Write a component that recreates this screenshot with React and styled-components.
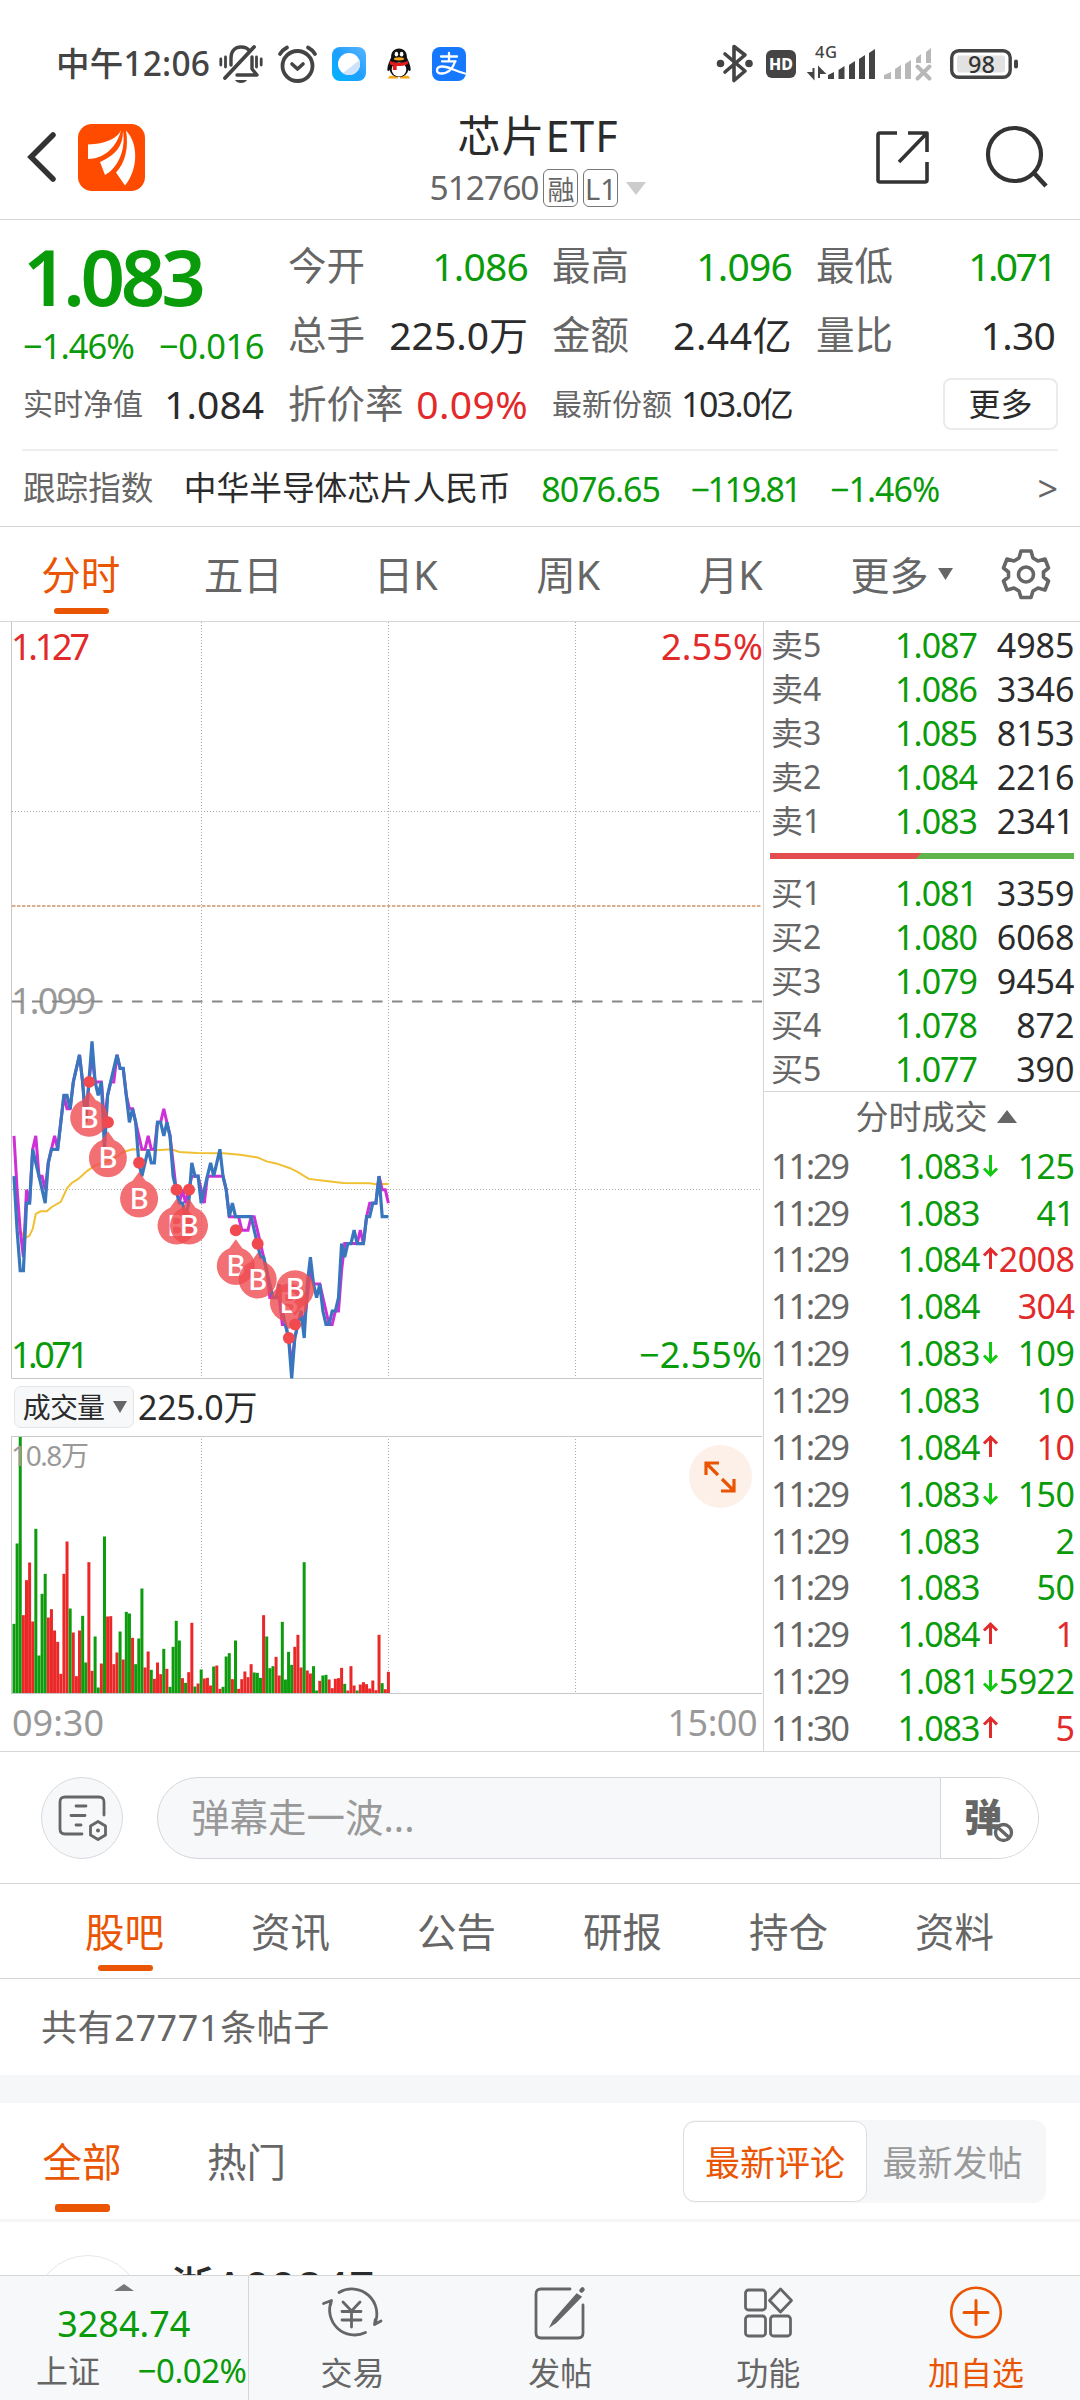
import React from "react";
import styled, { createGlobalStyle } from "styled-components";

const GREEN = "#0a9b0a";
const RED = "#e22a2a";
const ORANGE = "#ea5504";
const DARK = "#2b2b2b";
const GREY = "#666";
const LINE = "#d6d6d6";
const FONT = `"Noto Sans", "Noto Sans CJK SC", sans-serif`;

const GlobalStyle = createGlobalStyle`
  * { box-sizing: border-box; }
  body {
    margin: 0;
    background: #fff;
    font-family: ${FONT};
    color: ${DARK};
  }
  svg { display: block; flex: none; overflow: visible; }
`;

const Page = styled.div`
  width: 1080px;
  height: 2400px;
  overflow: hidden;
  display: flex;
  flex-direction: column;
  background: #fff;
`;

const Text = styled.span`
  font-size: ${(p) => p.$size || 39}px;
  line-height: 1;
  color: ${(p) => p.$color || DARK};
  font-weight: ${(p) => p.$weight || 400};
  letter-spacing: ${(p) => p.$ls || 0}px;
  white-space: nowrap;
`;

/* status bar */

const StatusBar = styled.div`
  height: 98px;
  flex: none;
  padding: 29px 62px 0 56px;
  display: flex;
  align-items: center;
`;

const StatusGroup = styled.div`
  display: flex;
  align-items: center;
  gap: ${(p) => p.$gap}px;
  margin-left: ${(p) => p.$left || 0}px;
`;

const Spacer = styled.div`
  flex: 1;
`;

/* header */

const Header = styled.div`
  height: 122px;
  flex: none;
  padding: 0 32px 0 28px;
  display: grid;
  grid-template-columns: 250px 1fr 250px;
  border-bottom: 1px solid ${LINE};
`;

const HeaderSide = styled.div`
  display: flex;
  align-items: center;
  gap: ${(p) => p.$gap}px;
  justify-content: ${(p) => (p.$end ? "flex-end" : "flex-start")};
  padding-bottom: 3px;
`;

const HeaderTitle = styled.div`
  display: flex;
  flex-direction: column;
  align-items: center;
  padding-top: 16px;
`;

const CodeRow = styled.div`
  display: flex;
  align-items: center;
  height: 38px;
  margin-top: 12px;
  gap: 5px;
`;

const Badge = styled.span`
  width: 35px;
  height: 38px;
  border: 1px solid #777;
  border-radius: 6px;
  display: flex;
  align-items: center;
  justify-content: center;
  font-size: ${(p) => p.$size}px;
  color: ${GREY};
`;

const CodeArrow = styled.div`
  margin-left: 3px;
`;

/* quote */

const Quote = styled.div`
  flex: none;
  height: 231px;
  margin: 0 22px;
  padding: 11px 0 0 1px;
  border-bottom: 2px solid #eee;
  display: grid;
  grid-template-columns: 241px 240px 240px 239px;
  grid-template-rows: repeat(3, 69px);
  column-gap: 24px;
`;

const PriceBlock = styled.div`
  grid-row: span 2;
  display: flex;
  flex-direction: column;
  justify-content: space-between;
  padding: 6px 0 6px;
`;

const Cell = styled.div`
  display: flex;
  align-items: center;
  justify-content: ${(p) => (p.$end ? "flex-end" : "space-between")};
`;

const MoreButton = styled.button`
  width: 115px;
  height: 52px;
  border: 2px solid #ebebeb;
  border-radius: 8px;
  background: #fff;
  padding: 0;
  margin-right: -3px;
  font-family: inherit;
  font-size: 32px;
  line-height: 1;
  color: ${DARK};
`;

const IndexRow = styled.div`
  flex: none;
  height: 76px;
  padding: 0 22px 0 23px;
  display: flex;
  align-items: center;
  gap: 30.5px;
  border-bottom: 1px solid ${LINE};
`;

/* tabs */

const Tabs = styled.div`
  flex: none;
  height: ${(p) => p.$height}px;
  padding-left: ${(p) => p.$left || 0}px;
  display: flex;
  align-items: center;
  border-bottom: 1px solid ${LINE};
`;

const Tab = styled.div`
  position: relative;
  width: ${(p) => p.$width}px;
  height: 100%;
  display: flex;
  align-items: center;
  justify-content: center;
  font-size: 39.5px;
  padding-bottom: 2px;
  padding-right: 1px;
  color: ${(p) => (p.$active ? ORANGE : GREY)};

  &::after {
    content: "";
    display: ${(p) => (p.$active ? "block" : "none")};
    position: absolute;
    left: 50%;
    bottom: 7px;
    width: 55px;
    height: ${(p) => p.$bar || 6}px;
    margin-left: -27.5px;
    border-radius: 3px;
    background: ${ORANGE};
  }
`;

const MoreTab = styled.div`
  display: flex;
  align-items: center;
  gap: 9px;
  width: 151px;
  margin-left: 38px;
`;

/* market: chart + order book */

const Market = styled.div`
  flex: none;
  height: 1130px;
  display: flex;
  border-bottom: 1px solid ${LINE};
`;

const ChartSide = styled.div`
  width: 763px;
  display: flex;
  flex-direction: column;
`;

const VolumeHead = styled.div`
  height: 57px;
  padding: 0 0 2px 14px;
  display: flex;
  align-items: center;
  gap: 4px;
`;

const VolumeSelect = styled.div`
  width: 120px;
  height: 42px;
  border: 1px solid #e3e5e8;
  border-radius: 7px;
  background: #f7f8fa;
  display: flex;
  align-items: center;
  justify-content: center;
  gap: 9px;
  padding-left: 2px;
`;

const TimeAxis = styled.div`
  flex: 1;
  padding: 0 6px 1px 12px;
  display: flex;
  align-items: center;
  justify-content: space-between;
`;

const BookSide = styled.div`
  flex: 1;
  border-left: 1px solid ${LINE};
  display: flex;
  flex-direction: column;
  padding-top: 1px;
`;

const OrderRow = styled.div`
  height: 44px;
  padding: 0 5.5px 0 7px;
  display: grid;
  grid-template-columns: 80px 126px 1fr;
  align-items: center;
  justify-items: end;

  > :first-child { justify-self: start; }
`;

const TickRow = styled(OrderRow)`
  height: 46.9px;
  padding-top: 1px;
  grid-template-columns: 100px 108.5px 18px 1fr;
`;

const RatioBar = styled.div`
  height: 6px;
  margin: 10px 6px 12px;
  background: linear-gradient(135deg, #e34d4d 0 49%, #5fb54b 49%);
`;

const TickTitle = styled.div`
  height: 51px;
  border-top: 1px solid ${LINE};
  display: flex;
  align-items: center;
  justify-content: center;
  gap: 9px;
  padding-left: 28px;
  padding-bottom: 1px;
`;

/* comment input */

const DanmuBar = styled.div`
  flex: none;
  height: 132px;
  padding: 0 41px;
  display: flex;
  align-items: center;
  gap: 34px;
  border-bottom: 1px solid ${LINE};
`;

const RoundButton = styled.div`
  width: 82px;
  height: 82px;
  border: 1.5px solid #d8dade;
  border-radius: 50%;
  background: #f7f8fa;
  display: flex;
  align-items: center;
  justify-content: center;
  padding-left: 2px;
`;

const DanmuInput = styled.div`
  flex: 1;
  height: 82px;
  border: 1.5px solid #d4d6da;
  border-radius: 41px;
  background: #f7f8fa;
  overflow: hidden;
  display: flex;
  align-items: center;
  justify-content: space-between;
  padding-left: 33px;
`;

const DanmuSwitch = styled.div`
  position: relative;
  width: 98px;
  height: 100%;
  background: #fff;
  border-left: 1.5px solid #d4d6da;
  padding: 0 0 4px 23px;
  display: flex;
  align-items: center;

  svg {
    position: absolute;
    left: 52px;
    top: 44px;
  }
`;

/* posts */

const PostCount = styled.div`
  flex: none;
  height: 96px;
  padding: 1px 0 0 41px;
  display: flex;
  align-items: center;
`;

const Band = styled.div`
  flex: none;
  height: 28px;
  background: #f6f7f9;
`;

const FilterRow = styled.div`
  flex: none;
  height: 119px;
  padding-right: 34px;
  display: flex;
  align-items: center;
  border-bottom: 3px solid #f5f6f8;
`;

const SortToggle = styled.div`
  margin-left: auto;
  width: 363px;
  height: 83px;
  border-radius: 12px;
  background: #f6f7f9;
  display: flex;
  align-items: center;
`;

const SortOption = styled.div`
  width: ${(p) => (p.$active ? 184 : 171)}px;
  height: 81px;
  border-radius: 12px;
  border: ${(p) => (p.$active ? "1.5px solid #dcdde0" : "none")};
  background: ${(p) => (p.$active ? "#fff" : "transparent")};
  color: ${(p) => (p.$active ? ORANGE : "#999")};
  font-size: 35px;
  padding-bottom: 1px;
  display: flex;
  align-items: center;
  justify-content: center;
`;

const Feed = styled.div`
  flex: 1;
  min-height: 0;
  overflow: hidden;
  padding: 33px 0 0 34px;
  display: flex;
  gap: 29px;
`;

const Avatar = styled.div`
  flex: none;
  width: 108px;
  height: 108px;
  border: 1px solid #e6e6e6;
  border-radius: 50%;
`;

const Author = styled.div`
  padding-top: 10px;
`;

/* bottom bar */

const BottomBar = styled.div`
  flex: none;
  height: 125px;
  background: #f7f8fa;
  border-top: 1px solid ${LINE};
  display: flex;
`;

const IndexBox = styled.div`
  width: 249px;
  border-right: 1px solid ${LINE};
  display: flex;
  flex-direction: column;
  align-items: center;
  padding-top: 8px;
`;

const IndexValue = styled(Text)`
  margin-top: 15px;
`;

const IndexLine = styled.div`
  width: 100%;
  padding: 0 1px 0 36px;
  margin-top: 12px;
  display: flex;
  justify-content: space-between;
  align-items: center;
`;

const NavItem = styled.div`
  width: 208.3px;
  padding-top: 10px;
  display: flex;
  flex-direction: column;
  align-items: center;
  gap: 17px;
`;

/* icons */

const Triangle = ({ w, h, color, up }) => (
  <svg width={w} height={h}>
    <path d={up ? `M0 ${h}L${w / 2} 0L${w} ${h}z` : `M0 0H${w}L${w / 2} ${h}z`} fill={color} />
  </svg>
);

const MuteIcon = () => (
  <svg width="44" height="38" viewBox="0 0 44 38" fill="none" stroke="#444" strokeWidth="3.4" strokeLinecap="round">
    <path d="M12 20V13C12 6 16 2 22 2c4 0 7 1.500 8.500 4" />
    <path d="M33 12v12l5 6H18" strokeLinejoin="round" />
    <path d="M35 2L6 33" strokeWidth="3.800" />
    <path d="M1.800 14v6M6.500 12v10M37.500 12v10M42.200 14v6" strokeWidth="2.800" />
    <path d="M16 35h12c-2 4-10 4-12 0z" fill="#444" stroke="none" />
  </svg>
);

const AlarmIcon = () => (
  <svg width="39" height="38" viewBox="0 0 39 38" fill="none" stroke="#444" strokeLinecap="round">
    <circle cx="19.500" cy="21" r="15" strokeWidth="3.800" />
    <path d="M14 19l5.500 5 5.500-5" strokeWidth="3.600" strokeLinejoin="round" />
    <path d="M2 9c2-3 4-5 7-6.500M37 9c-2-3-4-5-7-6.500" strokeWidth="3.800" />
  </svg>
);

const BrowserIcon = () => (
  <svg width="34" height="34" viewBox="0 0 34 34">
    <defs>
      <linearGradient id="browser" x1="0" y1="1" x2="1" y2="0">
        <stop offset="0" stopColor="#00b4ff" />
        <stop offset="0.500" stopColor="#1ea0ff" />
        <stop offset="1" stopColor="#5ab4ff" />
      </linearGradient>
    </defs>
    <rect width="34" height="34" rx="8" fill="url(#browser)" />
    <circle cx="17" cy="17" r="11" fill="#fff" />
    <path d="M27.500 13A11 11 0 0 1 11 26z" fill="#cfe2fb" />
  </svg>
);

const PenguinIcon = () => (
  <svg width="28" height="33" viewBox="0 0 30 34">
    <path d="M5 30h9v3H3zM16 30h9l2 3H16z" fill="#f7a81b" />
    <path d="M15 1c-5.500 0-8.500 4-8.500 9.500C5 14 2.500 19 2.500 23c0 3 1.500 2 2.500 1 1 4 4 7.500 10 7.500S24 28 25 24c1 1 2.500 2 2.500-1 0-4-2.500-9-4-12.500C23.500 5 20.500 1 15 1z" fill="#111" />
    <ellipse cx="15" cy="23.500" rx="7.800" ry="7.500" fill="#fff" />
    <ellipse cx="12.200" cy="7" rx="1.900" ry="2.600" fill="#fff" />
    <ellipse cx="17.800" cy="7" rx="1.900" ry="2.600" fill="#fff" />
    <ellipse cx="15" cy="12" rx="5.500" ry="1.800" fill="#f7a81b" />
    <path d="M5.500 14c5 3 14 3 19 0v3.500c-4 2-9 2.500-12 2.200V24H8.500v-5c-2-.5-3-1-3.500-1.500z" fill="#e31b1b" />
  </svg>
);

const PayIcon = () => (
  <svg width="34" height="34" viewBox="0 0 34 34">
    <rect width="34" height="34" rx="8" fill="#1677ff" />
    <g fill="none" stroke="#fff" strokeWidth="2.300" strokeLinecap="round">
      <path d="M9 9.500h16M17 6v8M10 14.300h13.500" />
      <path d="M23 14.500C21 22 15.500 26.500 9.500 26.500c-6 0-6-6.500 0-7C16 19 23 24 33 26.500" />
    </g>
  </svg>
);

const BluetoothIcon = () => (
  <svg width="36" height="39" viewBox="0 0 36 39" fill="none" stroke="#444" strokeWidth="3.600" strokeLinejoin="round" strokeLinecap="round">
    <path d="M8 10l20 17-11 9.500V2.500L28 11 8 28" />
    <circle cx="3.500" cy="19.500" r="2" fill="#444" />
    <circle cx="32" cy="19.500" r="2" fill="#444" />
  </svg>
);

const HdIcon = () => (
  <svg width="30" height="28" viewBox="0 0 30 28">
    <rect width="30" height="28" rx="6" fill="#444" />
    <text x="15" y="19.700" textAnchor="middle" textLength="24" fontSize="16" fontWeight="800" fill="#fff">HD</text>
  </svg>
);

const SignalIcon = () => (
  <svg width="67" height="34" viewBox="0 0 67 34" fill="#444">
    <text x="6" y="11" fontSize="16.500" fontWeight="500" textLength="22" fill="#444">4G</text>
    <path d="M4.500 21v10L0 26h4M10 31V21l5 5h-4" stroke="#444" strokeWidth="2" />
    <path d="M19 28l6-3v7h-6zM29.500 23l6-4v13h-6zM40 18l6-4v18h-6zM50 12l6-4v24h-6zM60 6l6-4v30h-6z" />
  </svg>
);

const NoSignalIcon = () => (
  <svg width="48" height="34" viewBox="0 0 48 34" fill="#b8b8b8">
    <path d="M0 28l7-3v7H0zM11 22l6-4v14h-6zM21 17l6-4v19h-6zM32 11l5-4v9h-5zM42 5l5-4v15h-5z" />
    <path d="M33.500 19.500l12 12M45.500 19.500l-12 12" stroke="#b8b8b8" strokeWidth="4" strokeLinecap="round" />
  </svg>
);

const BatteryIcon = () => (
  <svg width="68" height="30" viewBox="0 0 68 30">
    <rect x="1.700" y="1.700" width="58.500" height="26.600" rx="7" fill="#fff" stroke="#444" strokeWidth="3.400" />
    <rect x="7" y="6.500" width="48" height="17" rx="3" fill="#e2e2e2" />
    <rect x="64" y="10.500" width="4" height="9" rx="2" fill="#444" />
    <text x="31.500" y="23.500" textAnchor="middle" fontSize="23.500" fontWeight="500" fill="#333">98</text>
  </svg>
);

const BackIcon = () => (
  <svg width="28" height="50" viewBox="0 0 28 50" fill="none" stroke="#333" strokeWidth="5.500" strokeLinecap="round">
    <path d="M25 3L3 25l22 22" />
  </svg>
);

const LogoIcon = () => (
  <svg width="67" height="67" viewBox="0 0 67 67">
    <rect width="67" height="67" rx="14" fill="#ff4b00" />
    <path d="M43 6C40 14 28 20 10 20.500L10 35C26 35 39 23 43 6z" fill="#fff" />
    <path d="M45 7c0 15-7 24-23 31l5 13C40 44 48 26 45 7z" fill="#fff" />
    <path d="M48 6.500c3 17-1 33-10 42l9 13C60 46 61 20 48 6.500z" fill="#fff" />
  </svg>
);

const ShareIcon = () => (
  <svg width="53" height="53" viewBox="0 0 53 53" fill="none" stroke="#333" strokeWidth="3.600" strokeLinejoin="round">
    <path d="M21 2H4Q2 2 2 4V49Q2 51 4 51H49Q51 51 51 49V31" />
    <path d="M32 2h19v19M51 2L23 31" />
  </svg>
);

const SearchIcon = () => (
  <svg width="62" height="62" viewBox="0 0 62 62" fill="none" stroke="#333" strokeWidth="4.200">
    <circle cx="28.500" cy="28.500" r="26.500" />
    <path d="M47 46l13 14" strokeWidth="4.600" />
  </svg>
);

const GearIcon = () => (
  <svg width="48" height="50" viewBox="0 0 48 50" fill="none" stroke={GREY} strokeWidth="3.600" strokeLinejoin="round">
    <path d="M19 2h10l2 7 5 3 7-2 3.500 9-5 4v5l5 4-3.500 9-7-2-5 3-2 6.500H19l-2-6.500-5-3-7 2L1.500 32l5-4v-5l-5-4L5 10l7 2 5-3z" />
    <circle cx="24" cy="25.500" r="7.500" />
  </svg>
);

const TickArrow = ({ dir }) =>
  dir ? (
    <svg width="15" height="22" viewBox="0 0 15 22" fill="none" stroke={dir === "up" ? RED : "#12c912"} strokeWidth="3">
      <path d={dir === "up" ? "M7.500 21V1M1 7.500L7.500 1 14 7.500" : "M7.500 0v20M1 13.500L7.500 20 14 13.500"} />
    </svg>
  ) : (
    <i />
  );

const NoteIcon = () => (
  <svg width="50" height="46" viewBox="0 0 50 46" fill="none" stroke={GREY} strokeWidth="2.800" strokeLinecap="round">
    <path d="M46 20V7q0-5-5-5H7Q2 2 2 7v27q0 5 5 5h17M18 11h10M13 20.500h14M18 30h5" />
    <path d="M40 26.500l7.500 4.500v9L40 44.500 32.500 40v-9z" strokeLinejoin="round" />
    <circle cx="40" cy="35.500" r="2" fill={GREY} stroke="none" />
  </svg>
);

const BanIcon = () => (
  <svg width="21" height="21" viewBox="0 0 21 21" fill="#fff" stroke={GREY} strokeWidth="3.400">
    <circle cx="10.500" cy="10.500" r="8" />
    <path d="M5.500 6l10 9" />
  </svg>
);

const TradeIcon = () => (
  <svg width="60" height="54" viewBox="0 0 60 54" fill="none" stroke={GREY} strokeWidth="2.800" strokeLinecap="round">
    <path d="M17 6.500A25 25 0 0 1 52.500 38.500l.8-5M52.500 38.500l6.500-3.500M43.500 46.500A25 25 0 0 1 9.500 14.500l-1 4.500M9.500 14.500L1.500 17.500" />
    <path d="M21 16l8.500 9 8.500-9M20 25.500h19M20 34h19M29.500 25v16" />
  </svg>
);

const PostIcon = () => (
  <svg width="52" height="54" viewBox="0 0 52 54" fill="none" stroke={GREY} strokeWidth="2.800" strokeLinecap="round">
    <path d="M36 3H7Q2 3 2 8v39q0 5 5 5h37q5 0 5-5V19" />
    <path d="M43 9L20 35l-1.500 3 3-2L46 11z" fill={GREY} />
    <path d="M47.500 4.500l1-1" strokeWidth="4.500" />
  </svg>
);

const AppsIcon = () => (
  <svg width="48" height="54" viewBox="0 0 48 54" fill="none" stroke={GREY} strokeWidth="2.800" strokeLinejoin="round">
    <rect x="1.500" y="4" width="20" height="20" rx="3" />
    <rect x="1.500" y="30" width="20" height="20" rx="3" />
    <rect x="26.500" y="30" width="20" height="20" rx="3" />
    <path d="M36.500 3L47.500 14.500 36.500 26 25.500 14.500z" />
  </svg>
);

const AddIcon = () => (
  <svg width="54" height="54" viewBox="0 0 54 54" fill="none" stroke={ORANGE} strokeWidth="2.600">
    <circle cx="27" cy="26.500" r="24.800" />
    <path d="M15 26.500h24M27 14.500v24" strokeWidth="3" strokeLinecap="round" />
  </svg>
);

/* charts */

// distance below 1.099 in thousandths, one value per minute
const price = [
  13, 17, 20, 20, 15, 15, 11, 12, 13, 14, 15, 12, 11, 11, 11, 9, 7, 7, 8, 6, 5, 4, 6, 9, 6, 3, 6, 7, 6, 11,
  7, 6, 5, 4, 5, 5, 7, 9, 8, 9, 12, 13, 12, 11, 12, 12, 9, 9, 10, 9, 10, 13, 14, 15, 15, 16, 15, 12, 13, 13,
  15, 14, 13, 12, 13, 12, 11, 13, 14, 16, 15, 16, 16, 16, 16, 16, 16, 17, 18, 19, 19, 20, 21, 22, 22, 21, 23, 24, 25, 28,
  25, 24, 23, 25, 21, 19, 21, 22, 21, 23, 24, 24, 23, 23, 22, 18, 19, 18, 18, 17, 18, 18, 18, 16, 16, 15, 15, 13, 16, 16, 16,
];

const netValue = [
  10, 14, 17, 19, 14, 15, 11, 10, 13, 13, 14, 12, 11, 10, 11, 9, 7, 8, 8, 6, 5, 4, 6, 9, 6, 4, 6, 6, 6, 9,
  7, 6, 6, 4, 5, 5, 7, 8, 8, 9, 10, 11, 11, 10, 11, 11, 9, 9, 8, 9, 10, 12, 14, 15, 14, 15, 14, 13, 13, 13,
  14, 15, 13, 13, 13, 13, 13, 13, 14, 16, 16, 16, 16, 17, 17, 17, 16, 16, 17, 18, 19, 20, 22, 22, 22, 22, 24, 24, 25, 27,
  25, 24, 23, 24, 22, 20, 21, 21, 21, 22, 23, 24, 24, 23, 23, 20, 18, 18, 18, 18, 18, 17, 18, 16, 15, 15, 15, 13, 14, 14, 15,
];

// minute, level
const average = [
  [0, 13.3], [1, 14.8], [2, 17], [3.5, 17.6], [5, 17.4], [6, 16.9], [7, 15.8], [8.5, 15.6], [10.5, 15.6], [12, 15.3],
  [15, 14.9], [17, 13.9], [18.5, 13.5], [20.6, 13.2], [23.5, 12.6], [26, 12.2], [28.6, 12], [32, 11.7], [35, 11.2],
  [38, 11], [41, 11.05], [47, 11.05], [50.5, 11], [53, 11.2], [58.5, 11.27], [67, 11.3], [72.5, 11.4], [78, 11.6],
  [81, 11.9], [84, 12.05], [88.5, 12.4], [91, 12.7], [94.5, 13.2], [100, 13.35], [105.5, 13.5], [114, 13.52], [116, 13.6], [120, 13.57],
];

// minute, level, bubble above the dot
const buys = [
  [24, 6], [30, 9], [40, 12], [52, 14], [56, 14], [71, 17], [78, 18], [88, 25, true], [90, 24, true],
];

// bar heights, negative = falling minute
const volume = [
  -209, -450, -771, 235, 340, 393, 216, -494, -114, -299, -359, 228, 253, 189, 155, 59, 359, 456, -255, 183,
  52, 189, -233, -93, 394, 68, -171, -18, 90, -471, 231, 232, 88, 123, -186, 102, -245, -240, 167, -88,
  -165, -315, 78, 126, -71, 44, 93, 58, -134, 74, -20, -140, -218, -159, 46, -32, 64, 212, -21, 30,
  -72, 45, 47, 24, -81, 84, 14, -20, -111, -121, 43, -159, 14, 43, 66, 49, 88, -63, -62, -47,
  235, -171, -76, -82, 110, 54, -215, -42, -125, -86, 140, 176, 78, -394, 69, 60, -82, -9, 38, -54,
  -56, 42, 16, 44, 46, 77, -29, 9, 82, 24, -9, 27, 34, 28, 15, 39, 10, 176, -31, 13, 65,
];

const px = (i) => 14 + i * 3.12;
const py = (level) => 379 + level * 13.48;
const line = (points) => points.map(([i, v]) => `${px(i).toFixed(1)},${py(v).toFixed(1)}`).join(" ");
const series = (values) => line(values.map((v, i) => [i, v]));

const Buy = ({ x, y, above }) => (
  <g>
    <g transform={`translate(${x} ${above ? y - 35.5 : y + 36})`}>
      <path
        d="M-6.500-18L0-27 6.500-18A19 19 0 1 1-6.500-18z"
        transform={above ? "rotate(180)" : undefined}
        fill="#ef4c50"
        fillOpacity="0.8"
      />
      <text y="10" textAnchor="middle" fontSize="29.500" fontWeight="500" fill="#fff">B</text>
    </g>
    <circle cx={x} cy={y} r="6" fill="#f04a50" />
  </g>
);

const PriceChart = () => (
  <svg width="763" height="757" viewBox="0 0 763 757" fill="none">
    <g stroke="#aaa" strokeWidth="1" strokeDasharray="1 2">
      <path d="M201.500 0V756M388.500 0V756M575.500 0V756M12 189.500H762M12 567.500H762" />
    </g>
    <path d="M11.500 0V756.500H762" stroke="#c8c8c8" />
    <path d="M12 284H762" stroke="#cf9468" strokeWidth="1.500" strokeDasharray="3.500 1.500" />
    <text x="11" y="392" fontSize="36" textLength="85" fill="#999">1.099</text>
    <path d="M12 379.500H762" stroke="#888" strokeWidth="2" strokeDasharray="10.500 9.500" />
    <polyline points={line(average)} stroke="#f0c032" strokeWidth="2" />
    <polyline points={series(netValue)} stroke="#cf2fd6" strokeWidth="3" />
    <polyline points={series(price)} stroke="#3876bd" strokeWidth="3.200" />
    {buys.map(([i, v, above]) => (
      <Buy key={i} x={px(i) + 0.3} y={py(v)} above={above} />
    ))}
    <text x="11" y="38" fontSize="36" textLength="79" fill={RED}>1.127</text>
    <text x="661" y="38" fontSize="36" textLength="102" fill={RED}>2.55%</text>
    <text x="11" y="746" fontSize="36" textLength="78" fill={GREEN}>1.071</text>
    <text x="639" y="746" fontSize="36" textLength="123" fill={GREEN}>−2.55%</text>
  </svg>
);

const VolumeChart = () => (
  <svg width="763" height="259" viewBox="0 0 763 259" fill="none">
    <g stroke="#aaa" strokeDasharray="1 2">
      <path d="M201.500 0V258M388.500 0V258M575.500 0V258" />
    </g>
    {volume.map((v, i) => (
      <rect
        key={i}
        x={px(i) - 1.5}
        y={257.5 - Math.abs(v) / 3}
        width="3"
        height={Math.abs(v) / 3}
        fill={v < 0 ? "#0d9c0d" : "#ea2828"}
      />
    ))}
    <path d="M11.500 258V.5H762M11.500 257.500H762" stroke="#c8c8c8" />
    <text x="11" y="29.500" fontSize="28" textLength="78" fill="#999">10.8万</text>
    <circle cx="720.500" cy="40.500" r="31.500" fill="#fdf0e9" />
    <path d="M706 39V27h13M707 28l11 11M734 43v12h-13M733 54l-11-11" stroke={ORANGE} strokeWidth="3.200" />
  </svg>
);

/* data */

const sells = [
  ["卖5", "1.087", "4985"],
  ["卖4", "1.086", "3346"],
  ["卖3", "1.085", "8153"],
  ["卖2", "1.084", "2216"],
  ["卖1", "1.083", "2341"],
];

const bids = [
  ["买1", "1.081", "3359"],
  ["买2", "1.080", "6068"],
  ["买3", "1.079", "9454"],
  ["买4", "1.078", "872"],
  ["买5", "1.077", "390"],
];

const ticks = [
  ["11:29", "1.083", "down", "125", GREEN],
  ["11:29", "1.083", "", "41", GREEN],
  ["11:29", "1.084", "up", "2008", RED],
  ["11:29", "1.084", "", "304", RED],
  ["11:29", "1.083", "down", "109", GREEN],
  ["11:29", "1.083", "", "10", GREEN],
  ["11:29", "1.084", "up", "10", RED],
  ["11:29", "1.083", "down", "150", GREEN],
  ["11:29", "1.083", "", "2", GREEN],
  ["11:29", "1.083", "", "50", GREEN],
  ["11:29", "1.084", "up", "1", RED],
  ["11:29", "1.081", "down", "5922", GREEN],
  ["11:30", "1.083", "up", "5", RED],
];

const Orders = ({ rows }) =>
  rows.map(([label, value, count]) => (
    <OrderRow key={label}>
      <Text $size={32} $color={GREY}>{label}</Text>
      <Text $size={34} $color={GREEN} $ls={-1}>{value}</Text>
      <Text $size={34}>{count}</Text>
    </OrderRow>
  ));

const Stat = ({ label, value, color, small, size, ls = -0.8 }) => (
  <Cell>
    <Text $size={small ? 30 : 38.5} $color={GREY}>{label}</Text>
    <Text $size={size || 39} $color={color} $ls={ls}>{value}</Text>
  </Cell>
);

export default function App() {
  return (
    <Page>
      <GlobalStyle />
      <StatusBar>
        <Text $size={33.5} $color="#444" $weight={500} $ls={0.2}>中午12:06</Text>
        <StatusGroup $gap={15} $left={9}>
          <MuteIcon />
          <AlarmIcon />
          <BrowserIcon />
        </StatusGroup>
        <StatusGroup $gap={19} $left={19}>
          <PenguinIcon />
          <PayIcon />
        </StatusGroup>
        <Spacer />
        <StatusGroup $gap={13}>
          <BluetoothIcon />
          <HdIcon />
          <SignalIcon />
        </StatusGroup>
        <StatusGroup $gap={18} $left={8}>
          <NoSignalIcon />
          <BatteryIcon />
        </StatusGroup>
      </StatusBar>

      <Header>
        <HeaderSide $gap={22}>
          <BackIcon />
          <LogoIcon />
        </HeaderSide>
        <HeaderTitle>
          <Text $size={43} $ls={1}>芯片ETF</Text>
          <CodeRow>
            <Text $size={33.5} $color={GREY} $ls={-1}>512760</Text>
            <Badge $size={27}>融</Badge>
            <Badge $size={29}>L1</Badge>
            <CodeArrow>
              <Triangle w={20} h={13} color="#ccc" />
            </CodeArrow>
          </CodeRow>
        </HeaderTitle>
        <HeaderSide $gap={57} $end>
          <ShareIcon />
          <SearchIcon />
        </HeaderSide>
      </Header>

      <Quote>
        <PriceBlock>
          <Text $size={78} $weight={600} $color={GREEN} $ls={-4.3}>1.083</Text>
          <Cell>
            <Text $size={34.5} $color={GREEN} $ls={-1}>−1.46%</Text>
            <Text $size={34.5} $color={GREEN} $ls={-0.5}>−0.016</Text>
          </Cell>
        </PriceBlock>
        <Stat label="今开" value="1.086" color={GREEN} />
        <Stat label="最高" value="1.096" color={GREEN} />
        <Stat label="最低" value="1.071" color={GREEN} ls={-2.6} />
        <Stat label="总手" value="225.0万" ls={0} />
        <Stat label="金额" value="2.44亿" ls={0.5} />
        <Stat label="量比" value="1.30" />
        <Stat label="实时净值" value="1.084" small ls={0} />
        <Stat label="折价率" value="0.09%" color={RED} ls={0.4} />
        <Stat label="最新份额" value="103.0亿" small size={34} ls={-1.7} />
        <Cell $end>
          <MoreButton>更多</MoreButton>
        </Cell>
      </Quote>

      <IndexRow>
        <Text $size={32.6} $color={GREY}>跟踪指数</Text>
        <Text $size={32.7}>中华半导体芯片人民币</Text>
        <Text $size={34} $color={GREEN} $ls={-1}>8076.65</Text>
        <Text $size={34} $color={GREEN} $ls={-2.4}>−119.81</Text>
        <Text $size={34} $color={GREEN} $ls={-1}>−1.46%</Text>
        <Spacer />
        <Text $size={36} $color={GREY}>&gt;</Text>
      </IndexRow>

      <Tabs $height={95}>
        <Tab $width={162.5} $active>分时</Tab>
        <Tab $width={162.5}>五日</Tab>
        <Tab $width={162.5}>日K</Tab>
        <Tab $width={162.5}>周K</Tab>
        <Tab $width={162.5}>月K</Tab>
        <MoreTab>
          <Text $size={39} $color={GREY}>更多</Text>
          <Triangle w={15} h={12} color={GREY} />
        </MoreTab>
        <GearIcon />
      </Tabs>

      <Market>
        <ChartSide>
          <PriceChart />
          <VolumeHead>
            <VolumeSelect>
              <Text $size={28} $ls={-0.8}>成交量</Text>
              <Triangle w={14} h={12} color={GREY} />
            </VolumeSelect>
            <Text $size={34} $ls={-0.3}>225.0万</Text>
          </VolumeHead>
          <VolumeChart />
          <TimeAxis>
            <Text $size={36} $color="#999">09:30</Text>
            <Text $size={36} $color="#999" $ls={-0.5}>15:00</Text>
          </TimeAxis>
        </ChartSide>
        <BookSide>
          <Orders rows={sells} />
          <RatioBar />
          <Orders rows={bids} />
          <TickTitle>
            <Text $size={33} $color={GREY}>分时成交</Text>
            <Triangle w={20} h={13} color={GREY} up />
          </TickTitle>
          {ticks.map(([time, value, dir, count, color], i) => (
            <TickRow key={i}>
              <Text $size={34} $color={GREY} $ls={-2}>{time}</Text>
              <Text $size={34} $color={GREEN} $ls={-1}>{value}</Text>
              <TickArrow dir={dir} />
              <Text $size={34} $color={color} $ls={-0.5}>{count}</Text>
            </TickRow>
          ))}
        </BookSide>
      </Market>

      <DanmuBar>
        <RoundButton>
          <NoteIcon />
        </RoundButton>
        <DanmuInput>
          <Text $size={38.5} $color="#999">弹幕走一波...</Text>
          <DanmuSwitch>
            <Text $size={38} $weight={900} $color={GREY}>弹</Text>
            <BanIcon />
          </DanmuSwitch>
        </DanmuInput>
      </DanmuBar>

      <Tabs $height={95} $left={42}>
        {["股吧", "资讯", "公告", "研报", "持仓", "资料"].map((name, i) => (
          <Tab key={name} $width={166} $active={i === 0}>{name}</Tab>
        ))}
      </Tabs>

      <PostCount>
        <Text $size={36} $color={GREY} $ls={0.6}>共有27771条帖子</Text>
      </PostCount>
      <Band />
      <FilterRow>
        <Tab $width={165} $active $bar={8}>全部</Tab>
        <Tab $width={164}>热门</Tab>
        <SortToggle>
          <SortOption $active>最新评论</SortOption>
          <SortOption>最新发帖</SortOption>
        </SortToggle>
      </FilterRow>
      <Feed>
        <Avatar />
        <Author>
          <Text $size={43} $weight={500} $ls={1.5}>浙A99847</Text>
        </Author>
      </Feed>

      <BottomBar>
        <IndexBox>
          <Triangle w={20} h={7} color="#777" up />
          <IndexValue $size={36} $color={GREEN}>3284.74</IndexValue>
          <IndexLine>
            <Text $size={32} $color={GREY}>上证</Text>
            <Text $size={33} $color={GREEN} $ls={-0.5}>−0.02%</Text>
          </IndexLine>
        </IndexBox>
        <NavItem>
          <TradeIcon />
          <Text $size={32} $color={GREY}>交易</Text>
        </NavItem>
        <NavItem>
          <PostIcon />
          <Text $size={32} $color={GREY}>发帖</Text>
        </NavItem>
        <NavItem>
          <AppsIcon />
          <Text $size={32} $color={GREY}>功能</Text>
        </NavItem>
        <NavItem>
          <AddIcon />
          <Text $size={32} $color={ORANGE}>加自选</Text>
        </NavItem>
      </BottomBar>
    </Page>
  );
}
